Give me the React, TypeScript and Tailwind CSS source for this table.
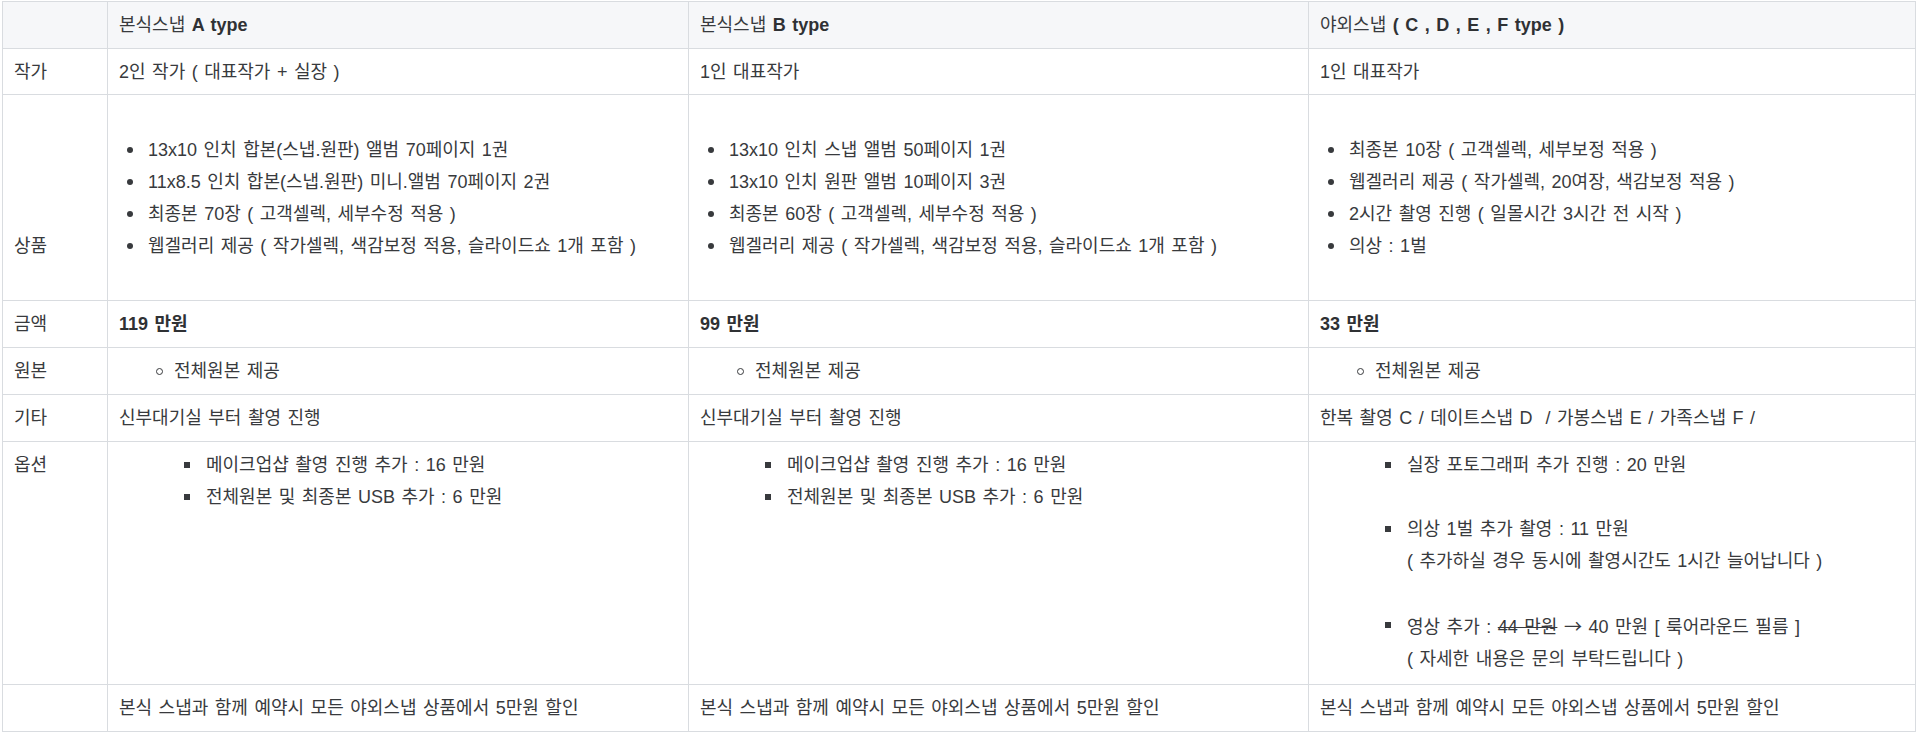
const cell = 'border-r border-b border-[#d9dce0] px-[11px] py-[7px]'

function Disc({ children }: { children: React.ReactNode }) {
  return (
    <li className="flex">
      <span className="flex h-[32px] w-[29px] shrink-0 items-center pl-[8px]">
        <span className="size-[6px] rounded-full bg-[#383a3d]" />
      </span>
      <span>{children}</span>
    </li>
  )
}

function Circle({ children }: { children: React.ReactNode }) {
  return (
    <li className="flex">
      <span className="flex h-[32px] w-[55px] shrink-0 items-center pl-[37px]">
        <span className="size-[7px] rounded-full border-[1.5px] border-[#383a3d]" />
      </span>
      <span>{children}</span>
    </li>
  )
}

function Square({
  children,
  className = '',
}: {
  children: React.ReactNode
  className?: string
}) {
  return (
    <li className={`flex ${className}`}>
      <span className="flex h-[32px] w-[87px] shrink-0 items-center pl-[65px]">
        <span className="size-[6px] bg-[#383a3d]" />
      </span>
      <span>{children}</span>
    </li>
  )
}

const products = [
  [
    '13x10 인치 합본(스냅.원판) 앨범 70페이지 1권',
    '11x8.5 인치 합본(스냅.원판) 미니.앨범 70페이지 2권',
    '최종본 70장 ( 고객셀렉, 세부수정 적용 )',
    '웹겔러리 제공 ( 작가셀렉, 색감보정 적용, 슬라이드쇼 1개 포함 )',
  ],
  [
    '13x10 인치 스냅 앨범 50페이지 1권',
    '13x10 인치 원판 앨범 10페이지 3권',
    '최종본 60장 ( 고객셀렉, 세부수정 적용 )',
    '웹겔러리 제공 ( 작가셀렉, 색감보정 적용, 슬라이드쇼 1개 포함 )',
  ],
  [
    '최종본 10장 ( 고객셀렉, 세부보정 적용 )',
    '웹겔러리 제공 ( 작가셀렉, 20여장, 색감보정 적용 )',
    '2시간 촬영 진행 ( 일몰시간 3시간 전 시작 )',
    '의상 : 1벌',
  ],
]

export default function App() {
  return (
    <div className="min-h-screen bg-white pt-px pl-[2px] font-['Liberation_Sans','Noto_Sans_CJK_KR',sans-serif] text-[18px] leading-[32px] text-[#383a3d] [word-spacing:1.5px]">
      <div className="grid w-[1914px] grid-cols-[105px_581px_620px_607px] grid-rows-[47px_46px_206px_47px_47px_47px_243px_47px] border-t border-l border-[#d9dce0]">
        {/* header */}
        <div className={`${cell} bg-[#f6f7f9]`} />
        <div className={`${cell} bg-[#f6f7f9]`}>
          본식스냅 <span className="font-semibold text-[#2f3134]">A type</span>
        </div>
        <div className={`${cell} bg-[#f6f7f9]`}>
          본식스냅 <span className="font-semibold text-[#2f3134]">B type</span>
        </div>
        <div className={`${cell} bg-[#f6f7f9]`}>
          야외스냅 <span className="font-semibold text-[#2f3134]">( C , D , E , F type )</span>
        </div>

        {/* 작가 */}
        <div className={cell}>작가</div>
        <div className={cell}>2인 작가 ( 대표작가 + 실장 )</div>
        <div className={cell}>1인 대표작가</div>
        <div className={cell}>1인 대표작가</div>

        {/* 상품 */}
        <div className={`${cell} pt-[135px]`}>상품</div>
        {products.map((list, i) => (
          <div key={i} className={`${cell} pt-[39px]`}>
            <ul>
              {list.map((t) => (
                <Disc key={t}>{t}</Disc>
              ))}
            </ul>
          </div>
        ))}

        {/* 금액 */}
        <div className={cell}>금액</div>
        <div className={`${cell} font-semibold text-[#2f3134]`}>119 만원</div>
        <div className={`${cell} font-semibold text-[#2f3134]`}>99 만원</div>
        <div className={`${cell} font-semibold text-[#2f3134]`}>33 만원</div>

        {/* 원본 */}
        <div className={cell}>원본</div>
        {[0, 1, 2].map((i) => (
          <div key={i} className={cell}>
            <ul>
              <Circle>전체원본 제공</Circle>
            </ul>
          </div>
        ))}

        {/* 기타 */}
        <div className={cell}>기타</div>
        <div className={cell}>신부대기실 부터 촬영 진행</div>
        <div className={cell}>신부대기실 부터 촬영 진행</div>
        <div className={`${cell} whitespace-pre`}>
          한복 촬영 C / 데이트스냅 D  / 가봉스냅 E / 가족스냅 F /
        </div>

        {/* 옵션 */}
        <div className={cell}>옵션</div>
        {[0, 1].map((i) => (
          <div key={i} className={cell}>
            <ul>
              <Square>메이크업샵 촬영 진행 추가 : 16 만원</Square>
              <Square>전체원본 및 최종본 USB 추가 : 6 만원</Square>
            </ul>
          </div>
        ))}
        <div className={cell}>
          <ul>
            <Square>실장 포토그래퍼 추가 진행 : 20 만원</Square>
            <Square className="mt-[32px]">
              의상 1벌 추가 촬영 : 11 만원
              <br />( 추가하실 경우 동시에 촬영시간도 1시간 늘어납니다 )
            </Square>
            <Square className="mt-[32px]">
              영상 추가 : <span className="line-through">44 만원</span>{' '}
              <span className="font-['Noto_Sans_CJK_KR',sans-serif]">→</span> 40 만원 [ 룩어라운드 필름 ]
              <br />( 자세한 내용은 문의 부탁드립니다 )
            </Square>
          </ul>
        </div>

        {/* 할인 */}
        <div className={cell} />
        <div className={cell}>본식 스냅과 함께 예약시 모든 야외스냅 상품에서 5만원 할인</div>
        <div className={cell}>본식 스냅과 함께 예약시 모든 야외스냅 상품에서 5만원 할인</div>
        <div className={cell}>본식 스냅과 함께 예약시 모든 야외스냅 상품에서 5만원 할인</div>
      </div>
    </div>
  )
}
